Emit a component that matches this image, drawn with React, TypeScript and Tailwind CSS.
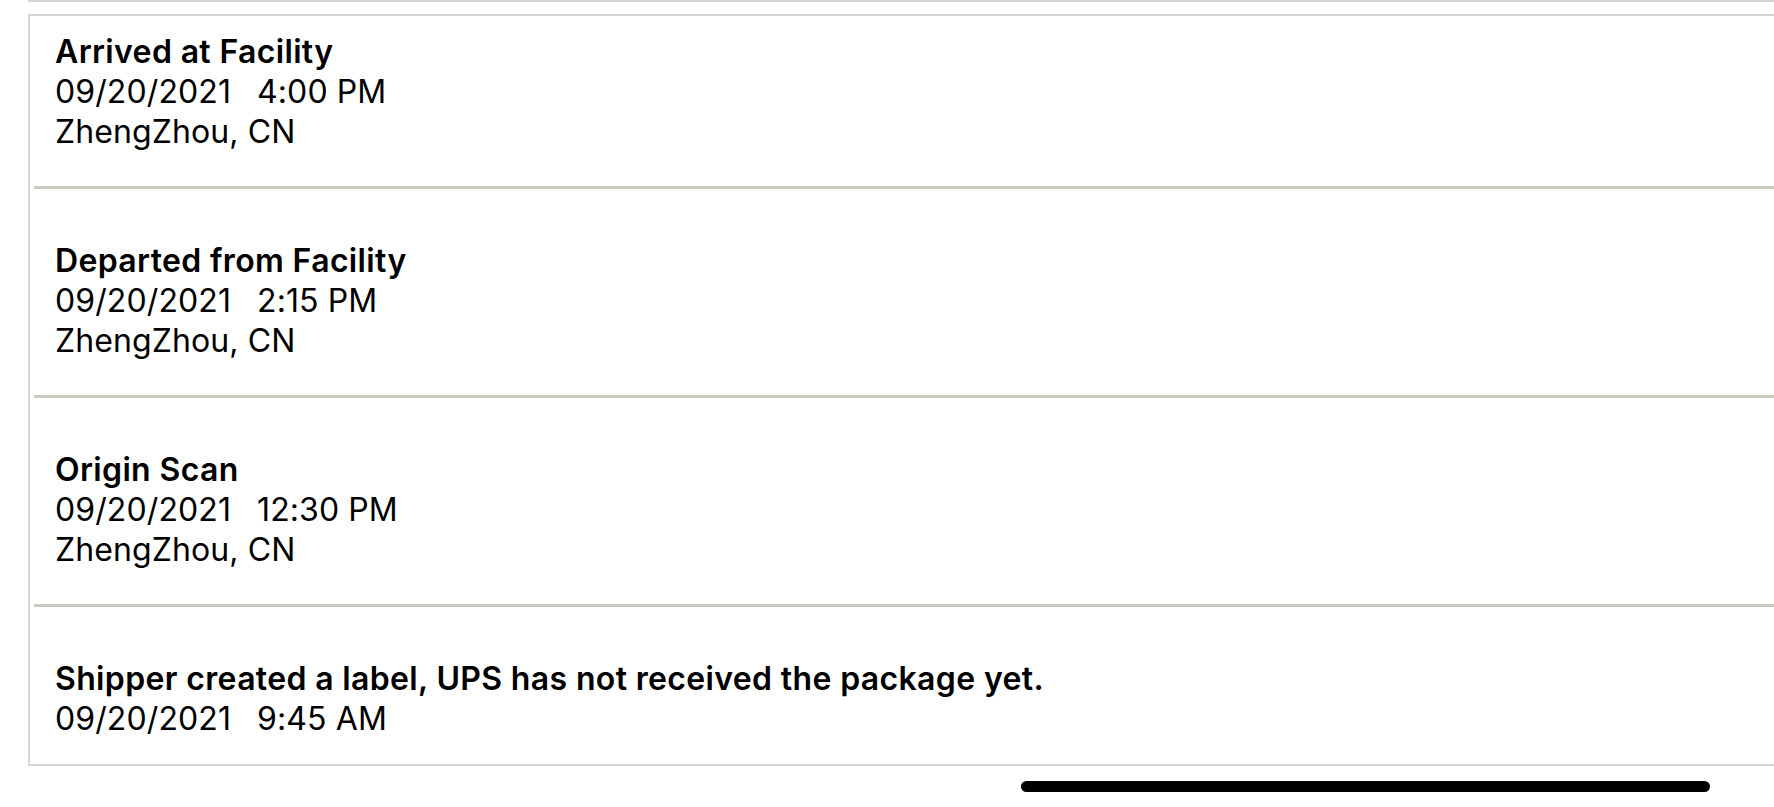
import React from "react";

type Activity = {
  status: string;
  date: string;
  time: string;
  location?: string;
};

const activities: Activity[] = [
  { status: "Arrived at Facility", date: "09/20/2021", time: "4:00 PM", location: "ZhengZhou, CN" },
  { status: "Departed from Facility", date: "09/20/2021", time: "2:15 PM", location: "ZhengZhou, CN" },
  { status: "Origin Scan", date: "09/20/2021", time: "12:30 PM", location: "ZhengZhou, CN" },
  { status: "Shipper created a label, UPS has not received the package yet.", date: "09/20/2021", time: "9:45 AM" },
];

function ActivityRow({ item, first, last }: { item: Activity; first: boolean; last: boolean }) {
  return (
    <li className="flex flex-col">
      <div
        className={
          first
            ? "pl-[25px] pt-[16px] pb-[34px]"
            : last
              ? "pl-[25px] pt-[52px] pb-[25px]"
              : "pl-[25px] pt-[52px] pb-[34px]"
        }
      >
        <p className="font-semibold leading-[40px] tracking-[0.35px]">{item.status}</p>
        <p className="leading-[40px] tracking-[0.1px]">
          <span>{item.date}</span>
          <span className="ml-[26px]">{item.time}</span>
        </p>
        {item.location && <p className="leading-[40px] tracking-[0.1px]">{item.location}</p>}
      </div>
      {!last && <div className="ml-[4px] h-[3px] bg-[#cdc9c1]" />}
    </li>
  );
}

export default function App() {
  return (
    <div className="relative h-[807px] w-[1774px] overflow-hidden bg-white font-['Inter',sans-serif] text-[32px] text-black">
      <div className="ml-[28px] h-[2px] bg-[#d5d5d5]" />
      <ul className="ml-[28px] mt-[12px] border-y-2 border-l-2 border-[#d5d5d5]">
        {activities.map((item, i) => (
          <ActivityRow key={item.status} item={item} first={i === 0} last={i === activities.length - 1} />
        ))}
      </ul>
      <div className="mt-[15px] flex">
        <div className="ml-[1021px] h-[11px] w-[689px] rounded-full bg-black" />
      </div>
    </div>
  );
}
